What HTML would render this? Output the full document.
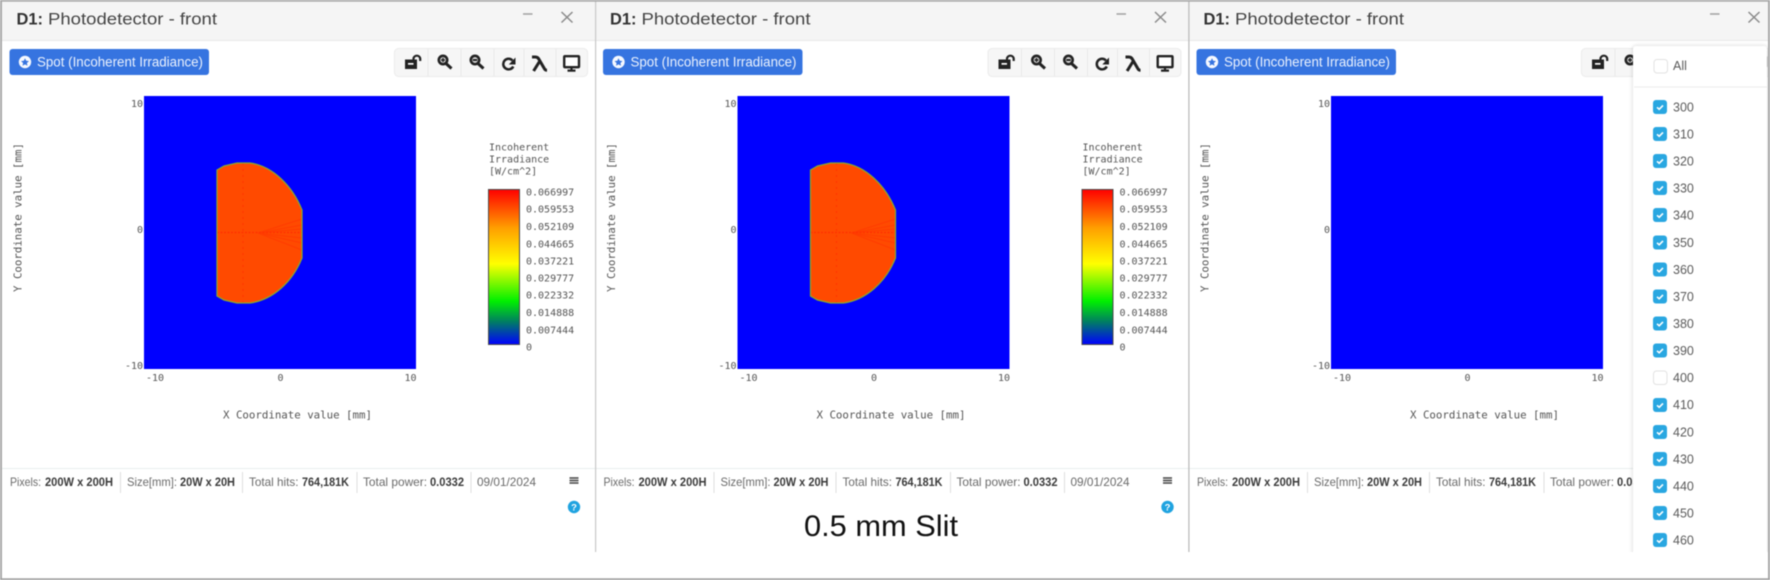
<!DOCTYPE html>
<html><head><meta charset="utf-8"><title>Photodetector</title>
<style>
html,body{margin:0;padding:0;background:#fff;width:1770px;height:580px;overflow:hidden}
svg{display:block;filter:blur(.4px)}
text{font-family:"Liberation Sans",sans-serif}
.m{font-family:"DejaVu Sans Mono","Liberation Mono",monospace;font-size:10px;fill:#555}
.t{font-size:16.5px;fill:#444}
.tb{font-size:16.5px;fill:#333;font-weight:bold}
.b{font-size:13.5px;fill:#eaf1fd}
.s{font-size:12px;fill:#6a6a6a}
.sb{font-size:12px;fill:#3a3a3a;font-weight:bold}
.i{font-size:12.5px;fill:#5a5a5a}
</style></head><body>
<svg xmlns="http://www.w3.org/2000/svg" width="1770" height="580" viewBox="0 0 1770 580">
<defs>
<clipPath id="sc"><path d="M217 170L224 166L237 163L250 163C272 166 292 185 302 210L302 258C292 283 272 300 250 303L237 303L224 300L217 296Z"/></clipPath>
<linearGradient id="cb" x1="0" y1="0" x2="0" y2="1">
<stop offset="0" stop-color="#ff0000"/><stop offset=".25" stop-color="#ffa000"/><stop offset=".48" stop-color="#ffff00"/><stop offset=".72" stop-color="#00f000"/><stop offset=".85" stop-color="#008060"/><stop offset="1" stop-color="#0000ff"/>
</linearGradient>
<g id="spot">
<path d="M217 170L224 166L237 163L250 163C272 166 292 185 302 210L302 258C292 283 272 300 250 303L237 303L224 300L217 296Z" fill="#ff4a00"/>
<g clip-path="url(#sc)" fill="none">
<path d="M217 232.5H302" stroke="#ff3000" stroke-width="1.2" stroke-dasharray="2 1.5"/>
<path d="M243 163V303" stroke="#ff3800" stroke-width="1.2" stroke-dasharray="2 4"/>
<path d="M258 233L302 219M258 233L302 225M258 233L302 229M258 233L302 238M258 233L302 243M258 233L302 250" stroke="#ff3400" stroke-width="1" stroke-opacity=".6"/>
</g>
<path d="M217 170L224 166L237 163L250 163C272 166 292 185 302 210L302 258C292 283 272 300 250 303L237 303L224 300L217 296Z" fill="none" stroke="#86aa30" stroke-width="1.2"/>
</g>
<g id="tools">
<path d="M405 59.5H417V69H405Z" fill="#222"/><rect x="408" y="63" width="5.5" height="1.7" fill="#fff"/>
<path d="M413.5 59.5V58.5A3.4 3.4 0 0 1 420.2 58.5V61" fill="none" stroke="#222" stroke-width="2.2"/>
<circle cx="443" cy="60" r="4.2" fill="#ddd" stroke="#222" stroke-width="2.6"/>
<path d="M441 60H445M443 58V62" stroke="#222" stroke-width="1.5"/>
<path d="M446 63.5L451.5 68.5" stroke="#222" stroke-width="3"/>
<circle cx="475" cy="60" r="4.2" fill="#ddd" stroke="#222" stroke-width="2.6"/>
<path d="M472.8 60H477.2" stroke="#222" stroke-width="2"/>
<path d="M478 63.5L483.5 68.5" stroke="#222" stroke-width="3"/>
<path d="M512.5 60.5A5.3 5.3 0 1 0 513.3 66.5" fill="none" stroke="#222" stroke-width="2.5"/>
<path d="M515.5 57.5V64.5H508.8Z" fill="#222"/>
<path d="M532 57H535.5C537.5 57 538.3 58 539 59.4L544.6 69C545.2 70 546 70.2 547 70.2M539.5 61.5L533.6 71" fill="none" stroke="#222" stroke-width="3"/>
<rect x="564.2" y="56.2" width="14.8" height="11" rx=".8" fill="#fff" stroke="#222" stroke-width="2.4"/>
<path d="M571.5 68V70M567.5 70.6H575.5" stroke="#222" stroke-width="2.2"/>
</g>
<g id="star">
<circle cx="25" cy="62" r="6.2" fill="#f6f9ff"/>
<path d="M25 58.2L26.2 60.8L29 61.1L26.9 63L27.5 65.8L25 64.4L22.5 65.8L23.1 63L21 61.1L23.8 60.8Z" fill="#3674e0"/>
</g>
<g id="cbk">
<rect x="0" y="0" width="14" height="14" rx="3" fill="#29a7e1"/>
<path d="M4 7.3L6.2 9.3L10 5.4" fill="none" stroke="#fff" stroke-width="1.6"/>
</g>
</defs>

<rect width="1770" height="580" fill="#fff"/>

<!-- PANEL 1 -->
<g>
<rect x="2" y="2" width="593" height="38" fill="#f5f5f5"/>
<rect x="2" y="40" width="593" height="1" fill="#e9e9e9"/>
<text class="tb" x="16.5" y="24.5" textLength="26.5" lengthAdjust="spacingAndGlyphs">D1:</text>
<text class="t" x="48" y="24.5" textLength="169" lengthAdjust="spacingAndGlyphs">Photodetector - front</text>
<path d="M523 14H532.5" stroke="#a0a0a0" stroke-width="1.5"/>
<path d="M561.5 12L572.5 22.5M572.5 12L561.5 22.5" stroke="#8a8a8a" stroke-width="1.5"/>
<rect x="9.5" y="49" width="199.5" height="26" rx="3" fill="#3674e0"/>
<use href="#star"/>
<text class="b" x="37" y="66.5" textLength="166" lengthAdjust="spacingAndGlyphs">Spot (Incoherent Irradiance)</text>
<rect x="394.5" y="48.5" width="193" height="28" rx="4" fill="#f6f6f6" stroke="#ebebeb"/>
<path d="M428 49V76M461 49V76M494 49V76M524 49V76M556 49V76" stroke="#e9e9e9"/>
<use href="#tools"/>
<rect x="144" y="96" width="272" height="273" fill="#0000ff"/>
<use href="#spot"/>
<text class="m" x="143" y="107" text-anchor="end">10</text>
<text class="m" x="143" y="233" text-anchor="end">0</text>
<text class="m" x="143" y="369" text-anchor="end">-10</text>
<text class="m" x="146" y="381">-10</text>
<text class="m" x="280.5" y="381" text-anchor="middle">0</text>
<text class="m" x="416.5" y="381" text-anchor="end">10</text>
<text class="m" x="223" y="418.5" textLength="149" style="font-size:10.8px">X Coordinate value [mm]</text>
<text class="m" transform="translate(21.5 292) rotate(-90)" textLength="149" style="font-size:10.8px">Y Coordinate value [mm]</text>
<text class="m" x="489" y="150.5">Incoherent</text>
<text class="m" x="489" y="162.5">Irradiance</text>
<text class="m" x="489" y="174.5">[W/cm^2]</text>
<rect x="488.5" y="189.5" width="31" height="155" fill="url(#cb)" stroke="#4a4a4a"/>
<text class="m" x="526" y="195.5">0.066997</text>
<text class="m" x="526" y="212.5">0.059553</text>
<text class="m" x="526" y="230">0.052109</text>
<text class="m" x="526" y="247.5">0.044665</text>
<text class="m" x="526" y="264.5">0.037221</text>
<text class="m" x="526" y="281.5">0.029777</text>
<text class="m" x="526" y="298.5">0.022332</text>
<text class="m" x="526" y="316">0.014888</text>
<text class="m" x="526" y="333.5">0.007444</text>
<text class="m" x="526" y="350.5">0</text>
<rect x="2" y="468" width="593" height="1" fill="#e9eeee"/>
<text class="s" x="10" y="486" textLength="31" lengthAdjust="spacingAndGlyphs">Pixels:</text>
<text class="sb" x="45" y="486" textLength="68" lengthAdjust="spacingAndGlyphs">200W x 200H</text>
<rect x="120" y="472" width="1" height="21" fill="#dedede"/>
<text class="s" x="127" y="486" textLength="50" lengthAdjust="spacingAndGlyphs">Size[mm]:</text>
<text class="sb" x="180" y="486" textLength="55" lengthAdjust="spacingAndGlyphs">20W x 20H</text>
<rect x="242" y="472" width="1" height="21" fill="#dedede"/>
<text class="s" x="249" y="486" textLength="49.5" lengthAdjust="spacingAndGlyphs">Total hits:</text>
<text class="sb" x="302" y="486" textLength="47" lengthAdjust="spacingAndGlyphs">764,181K</text>
<rect x="356.5" y="472" width="1" height="21" fill="#dedede"/>
<text class="s" x="363" y="486" textLength="64" lengthAdjust="spacingAndGlyphs">Total power:</text>
<text class="sb" x="430" y="486" textLength="34" lengthAdjust="spacingAndGlyphs">0.0332</text>
<rect x="470.5" y="472" width="1" height="21" fill="#dedede"/>
<text class="s" x="477" y="486" textLength="59" lengthAdjust="spacingAndGlyphs">09/01/2024</text>
<path d="M569.5 478H578.5M569.5 480.5H578.5M569.5 483H578.5" stroke="#444" stroke-width="1.6"/>
<circle cx="574" cy="507" r="6.2" fill="#1fa3e0"/>
<text x="574" y="510.5" text-anchor="middle" style="font-size:9.5px;font-weight:bold;fill:#fff">?</text>
</g>

<!-- PANEL 2 -->
<g transform="translate(593.5 0)">
<rect x="2" y="2" width="593" height="38" fill="#f5f5f5"/>
<rect x="2" y="40" width="593" height="1" fill="#e9e9e9"/>
<text class="tb" x="16.5" y="24.5" textLength="26.5" lengthAdjust="spacingAndGlyphs">D1:</text>
<text class="t" x="48" y="24.5" textLength="169" lengthAdjust="spacingAndGlyphs">Photodetector - front</text>
<path d="M523 14H532.5" stroke="#a0a0a0" stroke-width="1.5"/>
<path d="M561.5 12L572.5 22.5M572.5 12L561.5 22.5" stroke="#8a8a8a" stroke-width="1.5"/>
<rect x="9.5" y="49" width="199.5" height="26" rx="3" fill="#3674e0"/>
<use href="#star"/>
<text class="b" x="37" y="66.5" textLength="166" lengthAdjust="spacingAndGlyphs">Spot (Incoherent Irradiance)</text>
<rect x="394.5" y="48.5" width="193" height="28" rx="4" fill="#f6f6f6" stroke="#ebebeb"/>
<path d="M428 49V76M461 49V76M494 49V76M524 49V76M556 49V76" stroke="#e9e9e9"/>
<use href="#tools"/>
<rect x="144" y="96" width="272" height="273" fill="#0000ff"/>
<use href="#spot"/>
<text class="m" x="143" y="107" text-anchor="end">10</text>
<text class="m" x="143" y="233" text-anchor="end">0</text>
<text class="m" x="143" y="369" text-anchor="end">-10</text>
<text class="m" x="146" y="381">-10</text>
<text class="m" x="280.5" y="381" text-anchor="middle">0</text>
<text class="m" x="416.5" y="381" text-anchor="end">10</text>
<text class="m" x="223" y="418.5" textLength="149" style="font-size:10.8px">X Coordinate value [mm]</text>
<text class="m" transform="translate(21.5 292) rotate(-90)" textLength="149" style="font-size:10.8px">Y Coordinate value [mm]</text>
<text class="m" x="489" y="150.5">Incoherent</text>
<text class="m" x="489" y="162.5">Irradiance</text>
<text class="m" x="489" y="174.5">[W/cm^2]</text>
<rect x="488.5" y="189.5" width="31" height="155" fill="url(#cb)" stroke="#4a4a4a"/>
<text class="m" x="526" y="195.5">0.066997</text>
<text class="m" x="526" y="212.5">0.059553</text>
<text class="m" x="526" y="230">0.052109</text>
<text class="m" x="526" y="247.5">0.044665</text>
<text class="m" x="526" y="264.5">0.037221</text>
<text class="m" x="526" y="281.5">0.029777</text>
<text class="m" x="526" y="298.5">0.022332</text>
<text class="m" x="526" y="316">0.014888</text>
<text class="m" x="526" y="333.5">0.007444</text>
<text class="m" x="526" y="350.5">0</text>
<rect x="2" y="468" width="593" height="1" fill="#e9eeee"/>
<text class="s" x="10" y="486" textLength="31" lengthAdjust="spacingAndGlyphs">Pixels:</text>
<text class="sb" x="45" y="486" textLength="68" lengthAdjust="spacingAndGlyphs">200W x 200H</text>
<rect x="120" y="472" width="1" height="21" fill="#dedede"/>
<text class="s" x="127" y="486" textLength="50" lengthAdjust="spacingAndGlyphs">Size[mm]:</text>
<text class="sb" x="180" y="486" textLength="55" lengthAdjust="spacingAndGlyphs">20W x 20H</text>
<rect x="242" y="472" width="1" height="21" fill="#dedede"/>
<text class="s" x="249" y="486" textLength="49.5" lengthAdjust="spacingAndGlyphs">Total hits:</text>
<text class="sb" x="302" y="486" textLength="47" lengthAdjust="spacingAndGlyphs">764,181K</text>
<rect x="356.5" y="472" width="1" height="21" fill="#dedede"/>
<text class="s" x="363" y="486" textLength="64" lengthAdjust="spacingAndGlyphs">Total power:</text>
<text class="sb" x="430" y="486" textLength="34" lengthAdjust="spacingAndGlyphs">0.0332</text>
<rect x="470.5" y="472" width="1" height="21" fill="#dedede"/>
<text class="s" x="477" y="486" textLength="59" lengthAdjust="spacingAndGlyphs">09/01/2024</text>
<path d="M569.5 478H578.5M569.5 480.5H578.5M569.5 483H578.5" stroke="#444" stroke-width="1.6"/>
<circle cx="574" cy="507" r="6.2" fill="#1fa3e0"/>
<text x="574" y="510.5" text-anchor="middle" style="font-size:9.5px;font-weight:bold;fill:#fff">?</text>
</g>
<text x="804" y="536" textLength="154" lengthAdjust="spacingAndGlyphs" style="font-size:30px;fill:#111">0.5 mm Slit</text>

<!-- PANEL 3 -->
<g transform="translate(1187 0)">
<rect x="2" y="2" width="580" height="38" fill="#f5f5f5"/>
<rect x="2" y="40" width="580" height="1" fill="#e9e9e9"/>
<text class="tb" x="16.5" y="24.5" textLength="26.5" lengthAdjust="spacingAndGlyphs">D1:</text>
<text class="t" x="48" y="24.5" textLength="169" lengthAdjust="spacingAndGlyphs">Photodetector - front</text>
<path d="M523 14H532.5" stroke="#a0a0a0" stroke-width="1.5"/>
<path d="M561.5 12L572.5 22.5M572.5 12L561.5 22.5" stroke="#8a8a8a" stroke-width="1.5"/>
<rect x="9.5" y="49" width="199.5" height="26" rx="3" fill="#3674e0"/>
<use href="#star"/>
<text class="b" x="37" y="66.5" textLength="166" lengthAdjust="spacingAndGlyphs">Spot (Incoherent Irradiance)</text>
<rect x="394.5" y="48.5" width="193" height="28" rx="4" fill="#f6f6f6" stroke="#ebebeb"/>
<path d="M428 49V76M461 49V76M494 49V76M524 49V76M556 49V76" stroke="#e9e9e9"/>
<use href="#tools"/>
<rect x="144" y="96" width="272" height="273" fill="#0000ff"/>
<text class="m" x="143" y="107" text-anchor="end">10</text>
<text class="m" x="143" y="233" text-anchor="end">0</text>
<text class="m" x="143" y="369" text-anchor="end">-10</text>
<text class="m" x="146" y="381">-10</text>
<text class="m" x="280.5" y="381" text-anchor="middle">0</text>
<text class="m" x="416.5" y="381" text-anchor="end">10</text>
<text class="m" x="223" y="418.5" textLength="149" style="font-size:10.8px">X Coordinate value [mm]</text>
<text class="m" transform="translate(21.5 292) rotate(-90)" textLength="149" style="font-size:10.8px">Y Coordinate value [mm]</text>
<rect x="2" y="468" width="450" height="1" fill="#e9eeee"/>
<text class="s" x="10" y="486" textLength="31" lengthAdjust="spacingAndGlyphs">Pixels:</text>
<text class="sb" x="45" y="486" textLength="68" lengthAdjust="spacingAndGlyphs">200W x 200H</text>
<rect x="120" y="472" width="1" height="21" fill="#dedede"/>
<text class="s" x="127" y="486" textLength="50" lengthAdjust="spacingAndGlyphs">Size[mm]:</text>
<text class="sb" x="180" y="486" textLength="55" lengthAdjust="spacingAndGlyphs">20W x 20H</text>
<rect x="242" y="472" width="1" height="21" fill="#dedede"/>
<text class="s" x="249" y="486" textLength="49.5" lengthAdjust="spacingAndGlyphs">Total hits:</text>
<text class="sb" x="302" y="486" textLength="47" lengthAdjust="spacingAndGlyphs">764,181K</text>
<rect x="356.5" y="472" width="1" height="21" fill="#dedede"/>
<text class="s" x="363" y="486" textLength="64" lengthAdjust="spacingAndGlyphs">Total power:</text>
<text class="sb" x="430" y="486" textLength="34" lengthAdjust="spacingAndGlyphs">0.0332</text>
</g>

<!-- DROPDOWN -->
<rect x="1633" y="46" width="134" height="520" rx="3" fill="#fff" style="filter:drop-shadow(0 0 2px rgba(0,0,0,.18))"/>
<rect x="1654" y="59.5" width="13.5" height="13.5" rx="3" fill="#fff" stroke="#e2e2e2"/>
<text class="i" x="1673" y="70">All</text>
<rect x="1634" y="86.5" width="133" height="1" fill="#ececec"/>
<use href="#cbk" x="1653" y="100"/><text class="i" x="1673" y="111.5">300</text>
<use href="#cbk" x="1653" y="127"/><text class="i" x="1673" y="138.5">310</text>
<use href="#cbk" x="1653" y="154"/><text class="i" x="1673" y="165.5">320</text>
<use href="#cbk" x="1653" y="181"/><text class="i" x="1673" y="192.5">330</text>
<use href="#cbk" x="1653" y="208"/><text class="i" x="1673" y="219.5">340</text>
<use href="#cbk" x="1653" y="235.5"/><text class="i" x="1673" y="247">350</text>
<use href="#cbk" x="1653" y="262.5"/><text class="i" x="1673" y="274">360</text>
<use href="#cbk" x="1653" y="289.5"/><text class="i" x="1673" y="301">370</text>
<use href="#cbk" x="1653" y="316.5"/><text class="i" x="1673" y="328">380</text>
<use href="#cbk" x="1653" y="343.5"/><text class="i" x="1673" y="355">390</text>
<rect x="1653.5" y="371" width="13.5" height="13.5" rx="3" fill="#fff" stroke="#e2e2e2"/><text class="i" x="1673" y="382">400</text>
<use href="#cbk" x="1653" y="398"/><text class="i" x="1673" y="409">410</text>
<use href="#cbk" x="1653" y="425"/><text class="i" x="1673" y="436.5">420</text>
<use href="#cbk" x="1653" y="452"/><text class="i" x="1673" y="463.5">430</text>
<use href="#cbk" x="1653" y="479"/><text class="i" x="1673" y="490.5">440</text>
<use href="#cbk" x="1653" y="506"/><text class="i" x="1673" y="517.5">450</text>
<use href="#cbk" x="1653" y="533"/><text class="i" x="1673" y="544.5">460</text>

<!-- FRAME -->
<rect x="2" y="552" width="1766" height="26.5" fill="#fff"/>
<rect x="595" y="0" width="1.2" height="552" fill="#c8c8c8"/>
<rect x="1188.3" y="0" width="1.2" height="552" fill="#b8b8b8"/>
<rect x="0" y="0" width="1770" height="1.7" fill="#a8a8a8"/>
<rect x="0" y="0" width="2" height="580" fill="#a8a8a8"/>
<rect x="1768" y="0" width="2" height="580" fill="#a8a8a8"/>
<rect x="0" y="578.3" width="1770" height="1.7" fill="#a0a0a0"/>
</svg>
</body></html>
